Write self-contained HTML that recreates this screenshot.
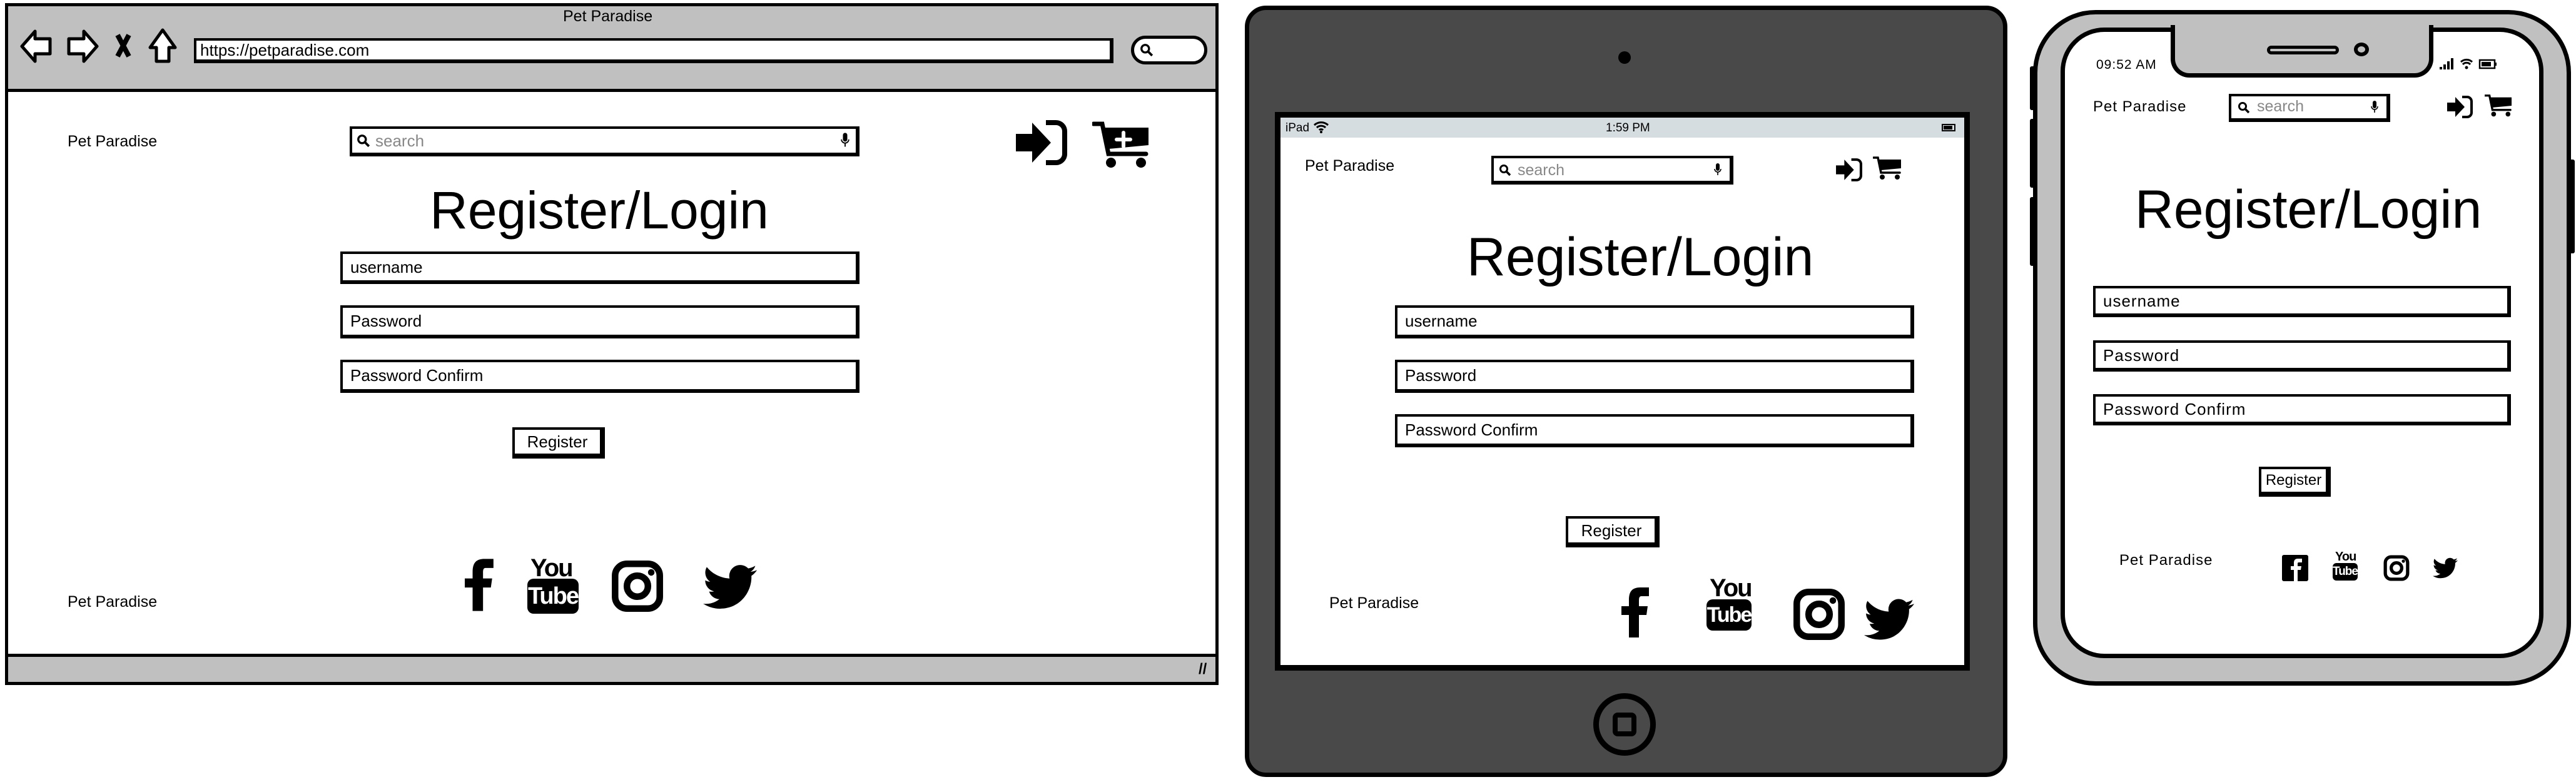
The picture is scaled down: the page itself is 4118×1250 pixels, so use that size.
<!DOCTYPE html>
<html><head><meta charset="utf-8"><style>
*{margin:0;padding:0;box-sizing:border-box}
body{width:4118px;height:1250px;background:#fff;position:relative;overflow:hidden;font-family:"Liberation Sans",sans-serif;color:#000}
.a{position:absolute}
.t{position:absolute;white-space:nowrap;line-height:1}
.box{position:absolute;background:#fff;border:4px solid #000;border-right-width:6px;border-bottom-width:6px}
.fld{font-size:26px;padding-left:12px;display:flex;align-items:center}
.btn{position:absolute;background:#fff;border:4px solid #000;border-right-width:8px;border-bottom-width:8px;font-size:26px;display:flex;align-items:center;justify-content:center}
.title{position:absolute;font-size:84px;text-align:center;width:700px;line-height:1}
svg{position:absolute;overflow:visible}
</style></head><body>
<svg width="0" height="0"><defs>
<symbol id="login" viewBox="0 0 88 72"><path d="M4 22h26V4l30 32-30 32V50H4z" fill="#000"/><path d="M52 4h16a14 14 0 0 1 14 14v36a14 14 0 0 1-14 14H52" fill="none" stroke="#000" stroke-width="8"/></symbol>
<symbol id="cart" viewBox="0 0 92 76"><path d="M2 4h14l10 48h60" fill="none" stroke="#000" stroke-width="7" stroke-linecap="round"/><path d="M16 10h74v28l-64 6z" fill="#000"/><circle cx="30" cy="66" r="8"/><circle cx="78" cy="66" r="8"/></symbol>
<symbol id="fb" viewBox="0 0 24 40"><path d="M16 7h6V0h-7C8 0 6 4 6 10v5H0v7h6v18h8V22h6l1-7h-7v-4c0-2 0-4 2-4z"/></symbol>
<symbol id="ig" viewBox="0 0 40 40"><rect x="3" y="3" width="34" height="34" rx="9" fill="none" stroke="#000" stroke-width="5"/><circle cx="20" cy="20" r="8" fill="none" stroke="#000" stroke-width="5"/><circle cx="30.5" cy="9.5" r="2.5"/></symbol>
<symbol id="tw" viewBox="0 0 24 24"><path d="M23.95 4.57a10 10 0 0 1-2.820.78 4.96 4.96 0 0 0 2.160-2.72c-.95.56-2 .96-3.130 1.180a4.92 4.92 0 0 0-8.380 4.480C7.69 8.1 4.07 6.130 1.640 3.160a4.82 4.82 0 0 0-.67 2.480c0 1.710.87 3.210 2.190 4.100a4.9 4.9 0 0 1-2.230-.62v.06a4.92 4.92 0 0 0 3.950 4.830 5 5 0 0 1-2.210.08 4.94 4.94 0 0 0 4.600 3.420 9.87 9.870 0 0 1-6.100 2.100c-.39 0-.78-.02-1.170-.07a14 14 0 0 0 7.560 2.210c9.050 0 14-7.500 14-13.990 0-.21 0-.42-.02-.63A9.94 9.94 0 0 0 24 4.590z"/></symbol>
<symbol id="mic" viewBox="0 0 12 20"><rect x="3" y="0" width="6" height="12" rx="3"/><path d="M1 9a5 5 0 0 0 10 0M6 14v5" fill="none" stroke="#000" stroke-width="1.6"/></symbol>
<symbol id="mag" viewBox="0 0 20 20"><circle cx="8" cy="8" r="5.5" fill="none" stroke="#000" stroke-width="3"/><path d="M12 12l6 6" stroke="#000" stroke-width="3.5"/></symbol>
</defs></svg>

<!-- ===== BROWSER ===== -->
<div class="a" style="left:8px;top:5px;width:1940px;height:1090px;border:5px solid #000;background:#fff"></div>
<div class="a" style="left:8px;top:5px;width:1940px;height:142px;border:5px solid #000;background:#c0c0c0"></div>
<div class="a" style="left:8px;top:1045px;width:1940px;height:50px;border:5px solid #000;background:#c0c0c0"></div>
<div class="t" style="left:900px;top:14px;font-size:25px">Pet Paradise</div>
<svg style="left:30px;top:46px" width="260" height="56" viewBox="0 0 260 56">
<path d="M5 28L26 4v12h24v24H26v12z" fill="#fff" stroke="#000" stroke-width="5" stroke-linejoin="round"/>
<path d="M125 28L104 4v12H80v24h24v12z" fill="#fff" stroke="#000" stroke-width="5" stroke-linejoin="round"/>
<path d="M158 10l18 34M176 10l-18 34" stroke="#000" stroke-width="8"/>
<path d="M230 2l-20 28h10v22h20V30h10z" fill="#fff" stroke="#000" stroke-width="5" stroke-linejoin="round"/>
</svg>
<div class="box" style="left:310px;top:61px;width:1470px;height:40px;font-size:26px;padding-left:6px;line-height:30px">https://petparadise.com</div>
<div class="a" style="left:1808px;top:57px;width:122px;height:46px;border:5px solid #000;border-radius:24px;background:#fff"></div>
<svg style="left:1822px;top:69px" width="22" height="22"><use href="#mag" width="22" height="22"/></svg>
<div class="t" style="left:1916px;top:1058px;font-size:24px;font-weight:bold">//</div>

<div class="t" style="left:108px;top:214px;font-size:25px">Pet Paradise</div>
<div class="box" style="left:559px;top:202px;width:815px;height:48px"></div>
<svg style="left:570px;top:214px" width="22" height="22"><use href="#mag" width="22" height="22"/></svg>
<div class="t" style="left:600px;top:212px;font-size:26px;color:#888">search</div>
<svg style="left:1344px;top:212px" width="14" height="24"><use href="#mic" width="14" height="24"/></svg>
<svg style="left:1620px;top:192px" width="88" height="72"><use href="#login" width="88" height="72"/></svg>
<svg style="left:1746px;top:194px" width="92" height="76"><use href="#cart" width="92" height="76"/><path d="M50 18v22M39 29h22" stroke="#fff" stroke-width="6" stroke-linecap="round"/></svg>
<div class="title" style="left:608px;top:294px;font-size:84px">Register/Login</div>
<div class="box fld" style="left:544px;top:402px;width:830px;height:52px">username</div>
<div class="box fld" style="left:544px;top:488px;width:830px;height:53px">Password</div>
<div class="box fld" style="left:544px;top:575px;width:830px;height:53px">Password Confirm</div>
<div class="btn" style="left:819px;top:683px;width:148px;height:50px">Register</div>
<div class="t" style="left:108px;top:950px;font-size:25px">Pet Paradise</div>
<svg style="left:743px;top:890px" width="50" height="90"><use href="#fb" width="50" height="90"/></svg>
<div class="t" style="left:848px;top:888px;font-size:40px;font-weight:bold;letter-spacing:-2px">You</div>
<div class="a" style="left:843px;top:925px;width:82px;height:56px;background:#000;border-radius:10px;color:#fff;font-size:38px;font-weight:bold;text-align:center;line-height:56px;letter-spacing:-2px">Tube</div>
<svg style="left:977px;top:895px" width="84" height="84"><use href="#ig" width="84" height="84"/></svg>
<svg style="left:1124px;top:895px" width="86" height="86"><use href="#tw" width="86" height="86"/></svg>

<!-- ===== TABLET ===== -->
<div class="a" style="left:1990px;top:9px;width:1219px;height:1233px;background:#494949;border:7px solid #000;border-radius:34px"></div>
<div class="a" style="left:2587px;top:82px;width:20px;height:20px;border-radius:50%;background:#000"></div>
<div class="a" style="left:2038px;top:179px;width:1111px;height:893px;background:#fff;border:9px solid #000"></div>
<div class="a" style="left:2047px;top:188px;width:1093px;height:32px;background:#d5dde0"></div>
<div class="t" style="left:2055px;top:195px;font-size:19px">iPad</div>
<svg style="left:2099px;top:193px" width="26" height="20" viewBox="0 0 26 20"><path d="M2 7a16 16 0 0 1 22 0M6 11a10 10 0 0 1 14 0M10 15a4 4 0 0 1 6 0" fill="none" stroke="#000" stroke-width="3"/><circle cx="13" cy="18" r="2"/></svg>
<div class="t" style="left:2567px;top:195px;font-size:19px">1:59 PM</div>
<div class="a" style="left:3104px;top:198px;width:22px;height:12px;border:2px solid #000"><div style="margin:1px;width:14px;height:6px;background:#000"></div></div>
<div class="t" style="left:2086px;top:253px;font-size:25px">Pet Paradise</div>
<div class="box" style="left:2384px;top:249px;width:387px;height:46px"></div>
<svg style="left:2396px;top:262px" width="20" height="20"><use href="#mag" width="20" height="20"/></svg>
<div class="t" style="left:2426px;top:260px;font-size:25px;color:#888">search</div>
<svg style="left:2740px;top:260px" width="12" height="22"><use href="#mic" width="12" height="22"/></svg>
<svg style="left:2933px;top:253px" width="45" height="37"><use href="#login" width="45" height="37"/></svg>
<svg style="left:2994px;top:250px" width="46" height="38"><use href="#cart" width="46" height="38"/></svg>
<div class="title" style="left:2272px;top:368px;font-size:86px">Register/Login</div>
<div class="box fld" style="left:2230px;top:488px;width:830px;height:53px">username</div>
<div class="box fld" style="left:2230px;top:575px;width:830px;height:53px">Password</div>
<div class="box fld" style="left:2230px;top:662px;width:830px;height:53px">Password Confirm</div>
<div class="btn" style="left:2503px;top:825px;width:150px;height:50px">Register</div>
<div class="t" style="left:2125px;top:952px;font-size:25px">Pet Paradise</div>
<svg style="left:2592px;top:935px" width="48" height="88"><use href="#fb" width="48" height="88"/></svg>
<div class="t" style="left:2733px;top:920px;font-size:40px;font-weight:bold;letter-spacing:-2px">You</div>
<div class="a" style="left:2728px;top:958px;width:72px;height:50px;background:#000;border-radius:10px;color:#fff;font-size:34px;font-weight:bold;text-align:center;line-height:50px;letter-spacing:-2px">Tube</div>
<svg style="left:2865px;top:940px" width="86" height="84"><use href="#ig" width="86" height="84"/></svg>
<svg style="left:2975px;top:950px" width="90" height="80"><use href="#tw" width="90" height="80"/></svg>
<div class="a" style="left:2547px;top:1108px;width:100px;height:100px;border-radius:50%;border:9px solid #000"></div>
<div class="a" style="left:2578px;top:1139px;width:38px;height:38px;border-radius:8px;border:8px solid #000"></div>

<!-- ===== PHONE ===== -->
<div class="a" style="left:3245px;top:106px;width:10px;height:70px;background:#000;border-radius:3px"></div>
<div class="a" style="left:3245px;top:190px;width:10px;height:110px;background:#000;border-radius:3px"></div>
<div class="a" style="left:3245px;top:315px;width:10px;height:110px;background:#000;border-radius:3px"></div>
<div class="a" style="left:4104px;top:255px;width:12px;height:150px;background:#000;border-radius:3px"></div>
<div class="a" style="left:3250px;top:16px;width:860px;height:1080px;background:#c0c0c0;border:7px solid #000;border-radius:100px"></div>
<div class="a" style="left:3294px;top:44px;width:772px;height:1008px;background:#fff;border:7px solid #000;border-radius:70px"></div>
<div class="a" style="left:3470px;top:40px;width:420px;height:84px;background:#c0c0c0;border:7px solid #000;border-top:none;border-radius:0 0 30px 30px"></div>
<div class="a" style="left:3477px;top:44px;width:406px;height:10px;background:#c0c0c0"></div>
<div class="a" style="left:3624px;top:73px;width:115px;height:14px;border:5px solid #000;border-radius:8px;background:#c0c0c0"></div>
<div class="a" style="left:3763px;top:68px;width:24px;height:22px;border:6px solid #000;border-radius:50%"></div>
<div class="t" style="left:3351px;top:93px;font-size:21px;letter-spacing:1px">09:52 AM</div>
<svg style="left:3900px;top:91px" width="110" height="22" viewBox="0 0 110 22"><rect x="0" y="16" width="4" height="4"/><rect x="6" y="12" width="4" height="8"/><rect x="12" y="7" width="4" height="13"/><rect x="18" y="2" width="4" height="18"/><path d="M34 8a13 13 0 0 1 18 0M37 12a8 8 0 0 1 12 0" fill="none" stroke="#000" stroke-width="3"/><circle cx="43" cy="17" r="2.5"/><rect x="64" y="5" width="24" height="13" fill="none" stroke="#000" stroke-width="2.5"/><rect x="67" y="8" width="15" height="7"/><rect x="89" y="9" width="2" height="5"/></svg>
<div class="t" style="left:3346px;top:159px;font-size:24px;letter-spacing:1px">Pet Paradise</div>
<div class="box" style="left:3563px;top:150px;width:258px;height:45px"></div>
<svg style="left:3577px;top:162px" width="20" height="20"><use href="#mag" width="20" height="20"/></svg>
<div class="t" style="left:3608px;top:158px;font-size:25px;color:#888">search</div>
<svg style="left:3790px;top:160px" width="12" height="22"><use href="#mic" width="12" height="22"/></svg>
<svg style="left:3910px;top:153px" width="44" height="36"><use href="#login" width="44" height="36"/></svg>
<svg style="left:3972px;top:150px" width="44" height="38"><use href="#cart" width="44" height="38"/></svg>
<div class="title" style="left:3340px;top:292px;font-size:86px">Register/Login</div>
<div class="box fld" style="left:3346px;top:457px;width:668px;height:50px;letter-spacing:1px">username</div>
<div class="box fld" style="left:3346px;top:544px;width:668px;height:50px;letter-spacing:1px">Password</div>
<div class="box fld" style="left:3346px;top:630px;width:668px;height:50px;letter-spacing:1px">Password Confirm</div>
<div class="btn" style="left:3611px;top:746px;width:115px;height:48px;font-size:24px">Register</div>
<div class="t" style="left:3388px;top:884px;font-size:24px;letter-spacing:1px">Pet Paradise</div>
<div class="a" style="left:3648px;top:887px;width:42px;height:42px;background:#000;border-radius:3px"></div>
<svg style="left:3662px;top:893px" width="20" height="36"><path d="M13 6h5V0h-6C6 0 5 3 5 8v4H0v6h5v18h6V18h5l1-6h-6V9c0-2 0-3 2-3z" fill="#fff"/></svg>
<div class="t" style="left:3733px;top:880px;font-size:20px;font-weight:bold;letter-spacing:-1px">You</div>
<div class="a" style="left:3729px;top:900px;width:40px;height:28px;background:#000;border-radius:6px;color:#fff;font-size:19px;font-weight:bold;text-align:center;line-height:28px;letter-spacing:-1px">Tube</div>
<svg style="left:3810px;top:887px" width="42" height="42"><use href="#ig" width="42" height="42"/></svg>
<svg style="left:3887px;top:888px" width="44" height="40"><use href="#tw" width="44" height="40"/></svg>
</body></html>
